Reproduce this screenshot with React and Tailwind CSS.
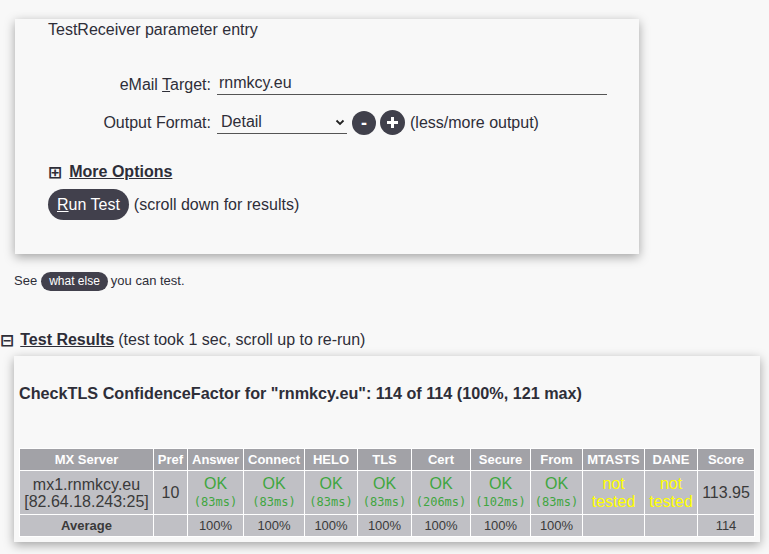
import React from 'react';

const cols = [
  { name: 'MX Server', w: 'w-[134px]' },
  { name: 'Pref', w: 'w-[34px]' },
  { name: 'Answer', w: 'w-[56px]' },
  { name: 'Connect', w: 'w-[61px]' },
  { name: 'HELO', w: 'w-[53px]' },
  { name: 'TLS', w: 'w-[54px]' },
  { name: 'Cert', w: 'w-[59px]' },
  { name: 'Secure', w: 'w-[60px]' },
  { name: 'From', w: 'w-[52px]' },
  { name: 'MTASTS', w: 'w-[62px]' },
  { name: 'DANE', w: 'w-[53px]' },
  { name: 'Score', w: 'w-[57px]' },
];

const times = ['83ms', '83ms', '83ms', '83ms', '206ms', '102ms', '83ms'];

function OkCell({ t }) {
  return (
    <td className="border border-white text-center align-middle px-0">
      <div className="text-[16px] leading-[18px] text-[#3fa63f]">OK</div>
      <div className="font-['DejaVu_Sans_Mono',monospace] text-[12px] leading-[18px] text-[#3fa63f]">({t})</div>
    </td>
  );
}

function NotTested() {
  return (
    <td className="border border-white text-center align-middle text-[16px] leading-[18px] text-[#ffff00]">
      not<br />tested
    </td>
  );
}

export default function App() {
  return (
    <div className="min-h-[554px] bg-[#f8f8f8] font-['Liberation_Sans',Arial,sans-serif] text-[#2e2e38] overflow-hidden">
      {/* Parameter entry card */}
      <div className="ml-[15px] mt-[19px] w-[624px] h-[235px] bg-[#f8f8f8] shadow-[0_3px_10px_rgba(0,0,0,0.35)] pl-[33px] pt-[1px]">
        <div className="text-[16px] leading-[20px]">TestReceiver parameter entry</div>

        <div className="mt-[33px] flex items-end">
          <label className="w-[169px] text-right text-[16px] leading-[20px] pr-[6px]">
            eMail <span className="underline">T</span>arget:
          </label>
          <input
            readOnly
            value="rnmkcy.eu"
            className="w-[390px] bg-transparent border-b border-[#555] text-[16px] leading-[20px] px-[2px] pb-[1px] outline-none text-[#2e2e38]"
          />
        </div>

        <div className="mt-[15px] flex items-center">
          <label className="w-[169px] text-right text-[16px] leading-[20px] pr-[6px]">Output Format:</label>
          <div className="w-[130px] flex items-center justify-between border-b border-[#555] pl-[4px] pr-[2px] h-[22px] text-[16px]">
            <span>Detail</span>
            <svg width="10" height="7" viewBox="0 0 10 7" fill="none">
              <path d="M1.5 1.5 L5 5 L8.5 1.5" stroke="#222" strokeWidth="1.8" />
            </svg>
          </div>
          <button className="ml-[5px] w-[24px] h-[24px] rounded-full bg-[#40404b] text-white font-bold text-[18px] leading-[24px] flex items-center justify-center">-</button>
          <button className="ml-[4px] w-[25px] h-[25px] rounded-full bg-[#40404b] flex items-center justify-center">
            <svg width="13" height="13" viewBox="0 0 13 13">
              <path d="M6.5 1 V12 M1 6.5 H12" stroke="white" strokeWidth="3" />
            </svg>
          </button>
          <span className="ml-[5px] text-[16px]">(less/more output)</span>
        </div>

        <div className="mt-[27px] flex items-center">
          <span className="font-['DejaVu_Sans',sans-serif] text-[17px] font-bold leading-none">⊞</span>
          <span className="ml-[7px] font-bold underline text-[16px] leading-[20px]">More Options</span>
        </div>

        <div className="mt-[7px] flex items-center">
          <button className="h-[31px] px-[9px] rounded-full bg-[#41404c] text-white text-[16px]">
            <span className="underline">R</span>un Test
          </button>
          <span className="ml-[5px] text-[16px]">(scroll down for results)</span>
        </div>
      </div>

      <div className="mt-[17px] ml-[14px] flex items-center text-[13px] leading-[20px]">
        See
        <span className="ml-[4px] mr-[3px] rounded-full bg-[#41404c] text-white text-[12px] leading-[19px] px-[8px]">what else</span>
        you can test.
      </div>

      <div className="mt-[39px] flex items-center text-[16px] leading-[20px]">
        <span className="font-['DejaVu_Sans',sans-serif] text-[17px] font-bold leading-none">⊟</span>
        <span className="ml-[6px] font-bold underline">Test Results</span>
        <span className="ml-[4px]">(test took 1 sec, scroll up to re-run)</span>
      </div>

      {/* Results card */}
      <div className="ml-[14px] mt-[6px] w-[746px] h-[186px] bg-[#f8f8f8] shadow-[0_3px_10px_rgba(0,0,0,0.35)] pl-[5px] pt-[27px]">
        <div className="font-bold text-[16.2px] leading-[20px]">
          CheckTLS ConfidenceFactor for "rnmkcy.eu": 114 of 114 (100%, 121 max)
        </div>

        <table className="mt-[45px] w-[736px] border-collapse table-fixed bg-[#c0c0c5] text-[#333]">
          <thead>
            <tr className="h-[22px] bg-[#a2a2a7]">
              {cols.map((c) => (
                <th key={c.name} className={`${c.w} border border-white text-white font-bold text-[13px] text-center p-0`}>
                  {c.name}
                </th>
              ))}
            </tr>
          </thead>
          <tbody>
            <tr className="h-[44px]">
              <td className="border border-white text-center text-[16px] leading-[17px] text-[#3a3a3a]">
                mx1.rnmkcy.eu<br />[82.64.18.243:25]
              </td>
              <td className="border border-white text-center text-[16px] text-[#3a3a3a]">10</td>
              {times.map((t, i) => (
                <OkCell key={i} t={t} />
              ))}
              <NotTested />
              <NotTested />
              <td className="border border-white text-center text-[16px] text-[#3a3a3a]">113.95</td>
            </tr>
            <tr className="h-[22px] text-[13px]">
              <td className="border border-white text-center font-bold text-[#3a3a3a]">Average</td>
              <td className="border border-white"></td>
              {times.map((t, i) => (
                <td key={i} className="border border-white text-center text-[#3a3a3a]">100%</td>
              ))}
              <td className="border border-white"></td>
              <td className="border border-white"></td>
              <td className="border border-white text-center text-[#3a3a3a]">114</td>
            </tr>
          </tbody>
        </table>
      </div>
    </div>
  );
}
